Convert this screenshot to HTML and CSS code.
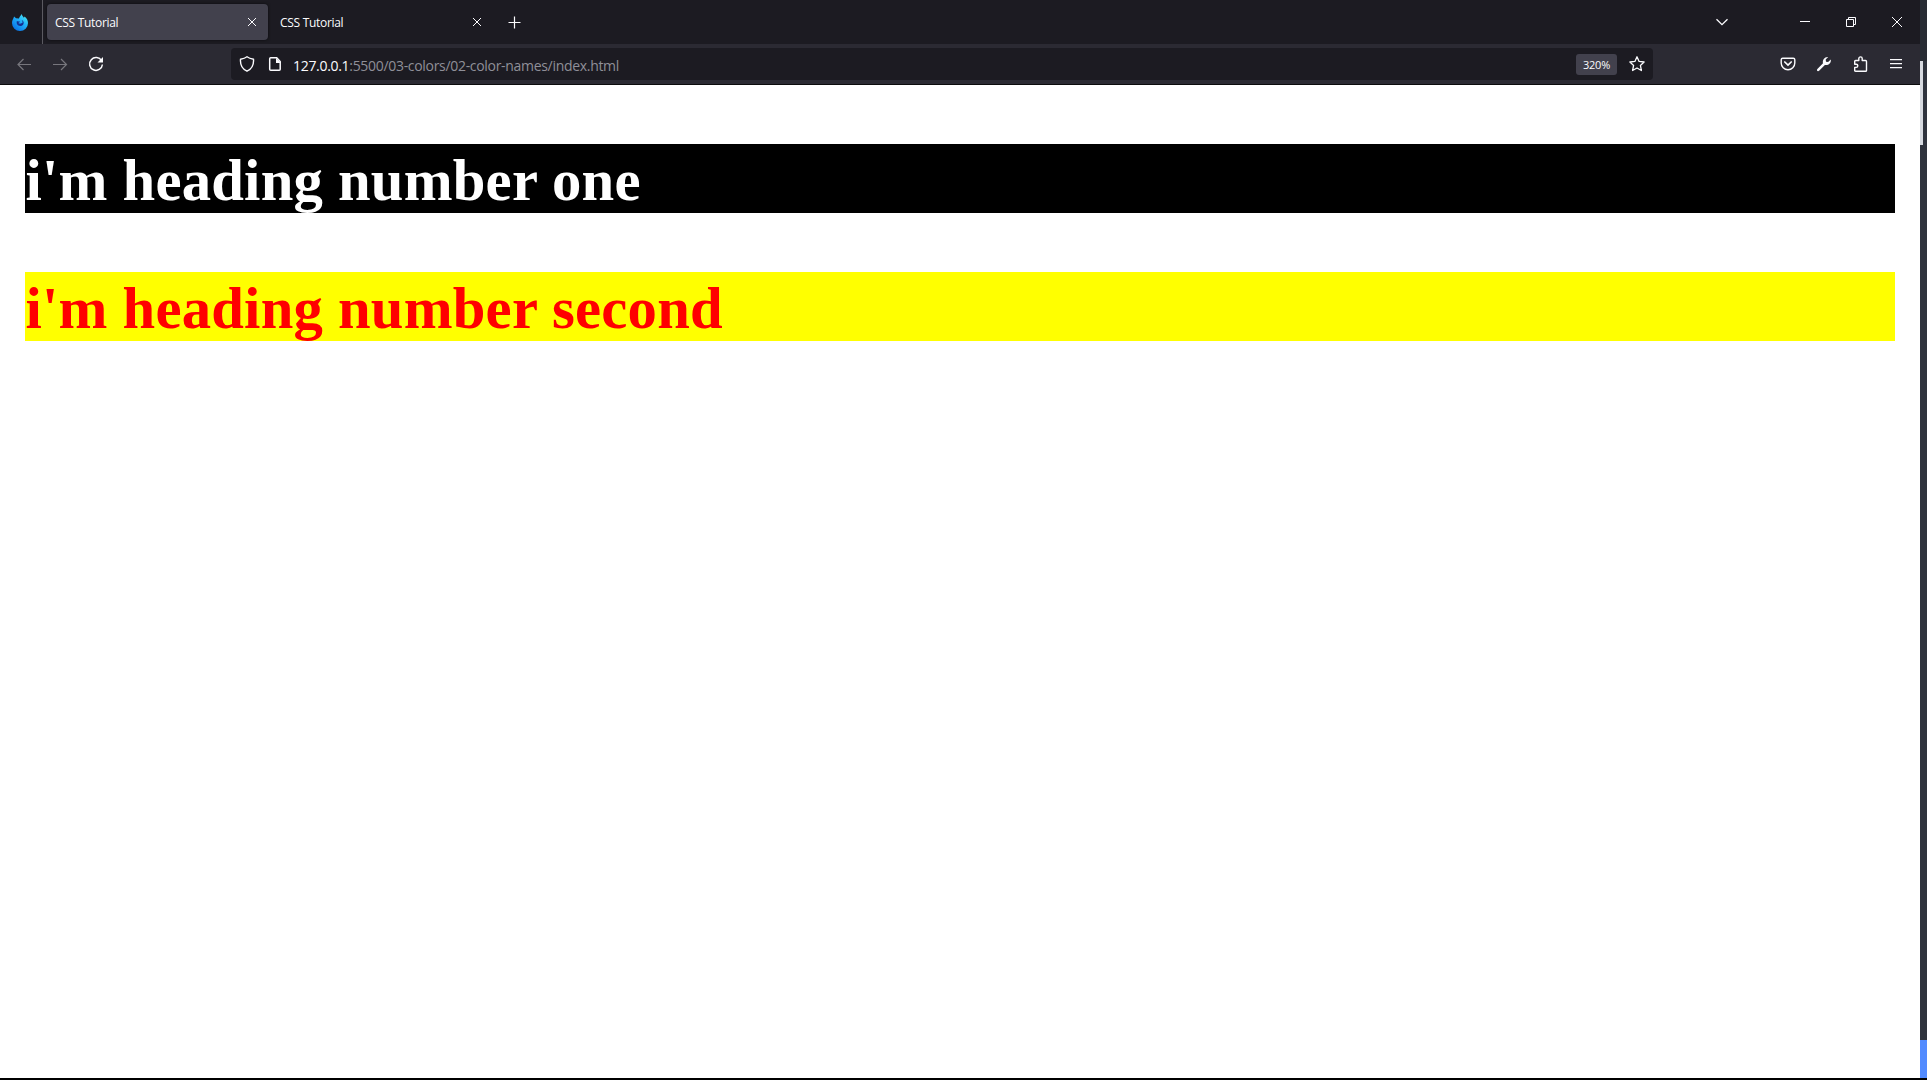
FILE: index.html
```html
<!DOCTYPE html>
<html lang="en">
<head>
<meta charset="utf-8">
<title>CSS Tutorial</title>
<link rel="stylesheet" href="styles.css">
</head>
<body>
<div class="window">
  <header class="tabs">
    <div class="brand">
      <svg width="16" height="17" viewBox="0 0 16 17">
        <defs><linearGradient id="flame" x1="1" y1="0" x2="0.2" y2="1"><stop offset="0" stop-color="#58f3ec"/><stop offset=".45" stop-color="#21b5fb"/><stop offset="1" stop-color="#086de5"/></linearGradient></defs>
        <path fill="url(#flame)" d="M2.1 2.5 4 4.2 7 4.4C7.5 2.6 8.6 1.8 9.7 0c.5 1.8 1.2 2.3 2.2 3.7l.7-1.2C15 4.6 16 6.4 16 9a8 8 0 0 1-16 0C0 6.7.8 5.9 1.4 4.3z"/>
        <path fill="#152f91" d="M4.7 7.2c1.4.3 2.7-.1 3.4.5L6.3 9c1.7 1.4 3.3.3 4.3-.5-.1-1-.4-1.7-1-2.4 2.1.8 2.7 3 1.5 4.6-2.1 2.6-6 1.1-6.4-1.4z"/>
      </svg>
    </div>
    <div class="tab active"><span>CSS Tutorial</span><svg class="close" width="10" height="10" viewBox="0 0 10 10"><path d="m1 1 8 8m0-8-8 8"/></svg></div>
    <div class="tab"><span>CSS Tutorial</span><svg class="close" width="10" height="10" viewBox="0 0 10 10"><path d="m1 1 8 8m0-8-8 8"/></svg></div>
    <svg class="plus" width="13" height="13" viewBox="0 0 13 13"><path d="M.5 6.500h12M6.500.5v12"/></svg>
    <div class="controls">
      <svg width="14" height="14" viewBox="0 0 14 14"><path stroke-width="1.3" d="m1.5 4.2 5.5 5.5 5.5-5.5"/></svg>
      <svg class="minimize" width="10" height="10" viewBox="0 0 10 10"><path d="M0 4.5h10"/></svg>
      <svg width="10" height="10" viewBox="0 0 10 10"><path d="M.5 2.5h7v7h-7zM2.5 2.5v-2h7v7h-2"/></svg>
      <svg width="10" height="10" viewBox="0 0 10 10"><path d="m0 0 10 10M10 0 0 10"/></svg>
    </div>
  </header>
  <nav class="toolbar">
    <div class="history">
      <svg class="dim" width="16" height="16" viewBox="0 0 16 16"><path d="M15 8.500H2m5.500-5.500L2 8.500 7.500 14"/></svg>
      <svg class="dim" width="16" height="16" viewBox="0 0 16 16"><path d="M1 8.500h13.500M9 3l5.500 5.500L9 14"/></svg>
      <svg width="16" height="16" viewBox="0 0 16 16"><path stroke-width="1.5" d="M13.600 4.800A6.400 6.400 0 1 0 14.400 8.500"/><path class="solid" d="M15 1v5.500H9.500z"/></svg>
    </div>
    <div class="address">
      <svg width="16" height="16" viewBox="0 0 16 16"><path stroke-width="1.4" d="M8 .8c2 1.500 3.900 2 6.500 2.500.4 5-1.700 9.700-6.500 11.900C3.200 13 1.100 8.300 1.500 3.300 4.100 2.800 6 2.300 8 .8z"/></svg>
      <svg class="file" width="14" height="14" viewBox="0 0 14 14"><path stroke-width="1.500" d="M2.700.8h6l3.500 3.700v7.700q0 1-1 1H2.700q-1 0-1-1V1.800q0-1 1-1z"/><path class="solid" d="M8 1l5 5H8z"/></svg>
      <span class="url"><b>127.0.0.1</b>:5500/03-colors/02-color-names/index.html</span>
      <span class="scale">320%</span>
      <svg class="star" width="16" height="16" viewBox="0 0 16 16"><path stroke-width="1.300" stroke-linejoin="round" d="m8 .8 2.100 4.600 5 .6-3.700 3.400 1 5.100L8 12l-4.400 2.500 1-5.100L.9 6l5-.6z"/></svg>
    </div>
    <div class="tools">
      <svg width="16" height="16" viewBox="0 0 16 16"><path stroke-width="1.400" d="M2.700 2.200h10.600q1.500 0 1.500 1.500V7a6.800 6.800 0 0 1-13.600 0V3.700q0-1.500 1.500-1.500z"/><path stroke-width="1.700" stroke-linecap="round" d="M4.800 6 8 9l3.200-3"/></svg>
      <svg width="16" height="16" viewBox="0 0 16 16"><path class="solid" d="M1.400 12.900 7 7.300C6.200 4.200 8.500.7 12.200 1L9.700 3.600l.3 2.100 2.100.3 2.700-2.600c.6 3.700-2.600 6.200-5.900 5.500l-5.800 5.800c-1.300 1.300-3-.4-1.700-1.800z"/></svg>
      <svg width="16" height="16" viewBox="0 0 16 16"><path stroke-width="1.400" stroke-linejoin="round" d="M2.700 7.500V5.400q0-.9.900-.9h3.200V2.600a1.700 1.700 0 0 1 3.400 0v1.900h3.400q.9 0 .9.900v9q0 .9-.9.900h-10q-.9 0-.9-.9v-3h1.500a1.500 1.500 0 0 0 0-3.200H2.700z"/></svg>
      <svg width="16" height="16" viewBox="0 0 16 16"><path stroke-width="1.250" d="M2 3.700h12M2 7.700h12M2 11.700h12"/></svg>
    </div>
  </nav>
  <main class="page">
    <h1 class="heading first">i'm heading number one</h1>
    <h1 class="heading second">i'm heading number second</h1>
  </main>
</div>
<aside class="edge">
  <div class="edge-top"></div><div class="edge-thumb"></div><div class="edge-rest"></div><div class="edge-status"></div>
</aside>
</body>
</html>
```
FILE: styles.css
```css
* { box-sizing: border-box; }
body { margin: 0; width: 1927px; height: 1080px; display: flex; overflow: hidden; background: #fff; font-family: "Open Sans", "Noto Sans", sans-serif; }
svg { display: block; flex: none; fill: none; stroke: #fbfbfe; }
.solid { fill: #fbfbfe; stroke: none; }
.window { width: 1920px; height: 1080px; display: flex; flex-direction: column; border-bottom: 2px solid #000; }
.tabs { height: 44px; flex: none; display: flex; align-items: center; background: #1c1b22; color: #fbfbfe; }
.brand { width: 43px; height: 44px; padding: 14px 0 0 12px; border-right: 1px solid #5b5a61; margin-right: 4px; }
.brand svg { stroke: none; }
.tab { width: 221px; height: 36px; margin-right: 4px; padding: 0 11px 0 8px; border-radius: 4px; display: flex; align-items: center; justify-content: space-between; font-size: 12px; }
.tab span { letter-spacing: -.3px; padding-top: 1px; }
.tab.active { background: #42414d; box-shadow: 0 0 3px #0b0b0e; }
.plus { margin: 1px 0 0 11px; stroke-width: 1.2; }
.controls { margin-left: auto; margin-right: 18px; display: flex; align-items: center; gap: 36px; }
.minimize { margin-left: 35px; }
.toolbar { height: 41px; flex: none; display: flex; align-items: center; background: #2b2a33; border-bottom: 1px solid #0c0c0d; }
.history { width: 231px; padding-left: 16px; display: flex; gap: 20px; }
.dim { stroke: #77767d; stroke-width: 1.2; }
.address { width: 1422px; height: 32px; padding: 0 8px; border-radius: 4px; background: #1c1b22; display: flex; align-items: center; }
.file { margin-left: 13px; }
.url { margin-left: 11px; padding-top: 2px; color: #8f8f98; font-size: 14px; letter-spacing: -.31px; white-space: nowrap; }
.url b { color: #fbfbfe; font-weight: 400; }
.scale { width: 41px; height: 21px; margin-left: auto; border-radius: 3px; background: #42414d; color: #fbfbfe; font-size: 11px; line-height: 21px; text-align: center; letter-spacing: -.2px; }
.star { margin-left: 12px; }
.tools { margin-left: auto; margin-right: 16px; display: flex; gap: 20px; }
.page { flex: 1; padding: 59px 25px 0; display: flex; flex-direction: column; gap: 59px; background: #fff; }
.heading { margin: 0; height: 69px; padding-left: .5px; font: bold 58.7px/73px "Liberation Serif", serif; letter-spacing: .22px; white-space: nowrap; }
.first { color: #fff; background: #000; }
.second { color: red; background: yellow; }
.edge { width: 7px; flex: none; display: flex; flex-direction: column; background: #2f333d; }
.edge-top { height: 61px; background: #282c34; }
.edge-thumb { height: 84px; border-left: 3px solid #d7dae0; }
.edge-rest { flex: 1; }
.edge-status { height: 40px; background: #528bff; border-bottom: 2px solid #000; }
```
